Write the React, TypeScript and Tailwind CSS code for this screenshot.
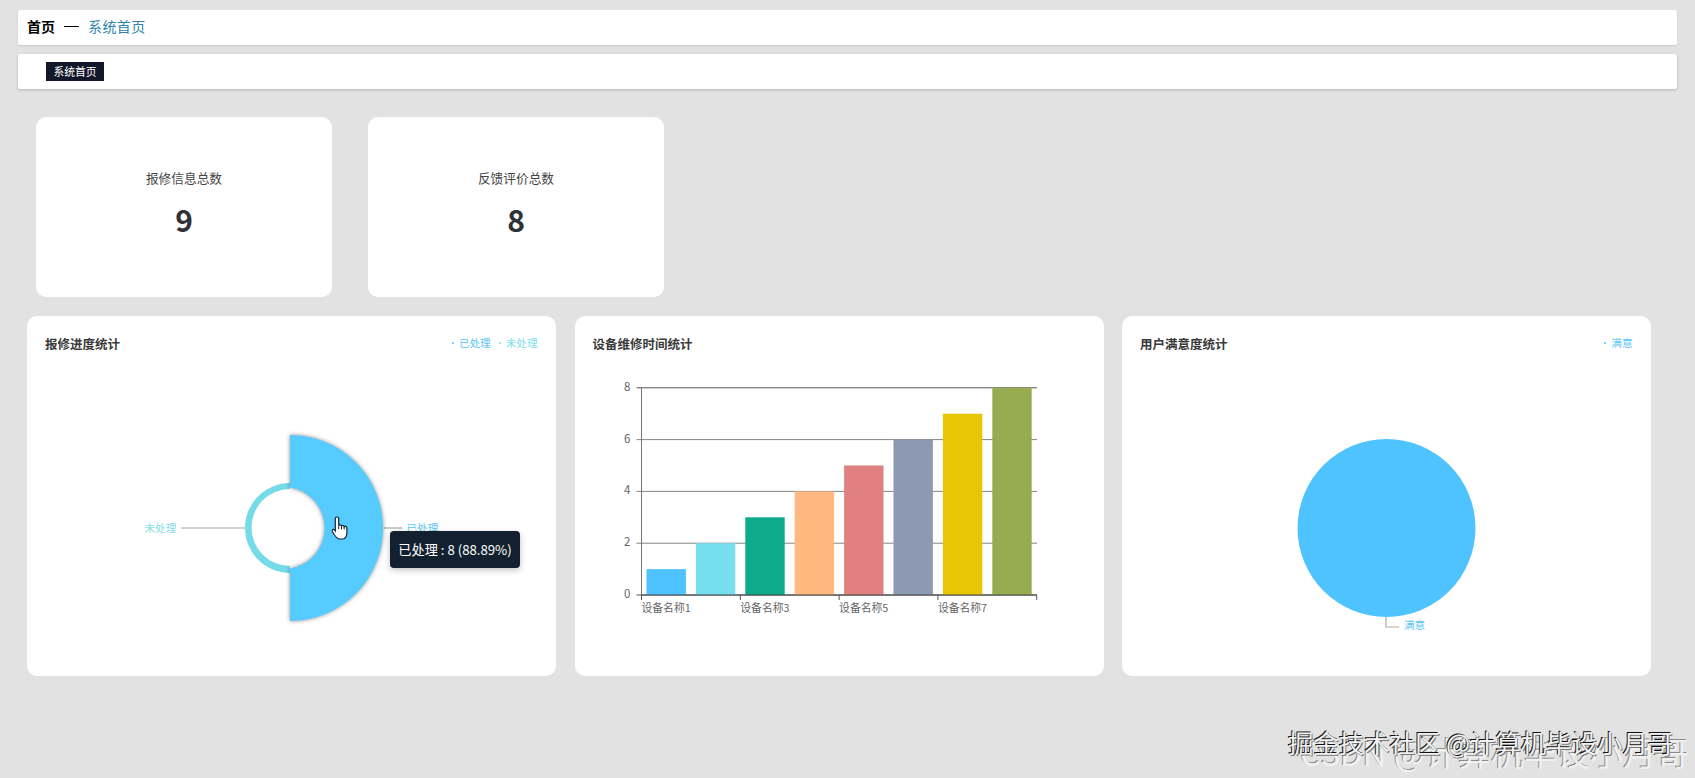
import React from 'react';

const bars = [
  { value: 1, color: '#4fc3ff' },
  { value: 2, color: '#76deee' },
  { value: 3, color: '#0dab8b' },
  { value: 4, color: '#ffb980' },
  { value: 5, color: '#e08080' },
  { value: 6, color: '#8d98b3' },
  { value: 7, color: '#e6c605' },
  { value: 8, color: '#97ac50' },
];

const AXIS_X = 641;
const AXIS_BOTTOM = 594;
const STEP_X = 49.4;
const STEP_Y = 25.9;

const StatCard: React.FC<{ label: string; value: number }> = ({ label, value }) => (
  <div className="w-[296px] h-[180px] bg-white rounded-[10px] flex flex-col items-center">
    <div className="mt-[51px] h-5 leading-5 text-[12.7px] text-[#444]">{label}</div>
    <div className="mt-[11px] h-[40px] leading-[40px] text-[30px] font-bold text-[#2f3136]">{value}</div>
  </div>
);

const Legend: React.FC<{ items: { name: string; color: string }[] }> = ({ items }) => (
  <div className="flex gap-[8px] -mt-[2px]">
    {items.map((it) => (
      <div key={it.name} className="flex items-center gap-[5px] text-[10.6px] leading-4" style={{ color: it.color }}>
        <span className="w-[2px] h-[2px] rounded-full" style={{ background: it.color }} />
        {it.name}
      </div>
    ))}
  </div>
);

const ChartCard: React.FC<{ title: string; legend?: { name: string; color: string }[]; children: React.ReactNode }> = ({ title, legend, children }) => (
  <div className="relative w-[529px] h-[360px] bg-white rounded-[10px]">
    <div className="flex items-center justify-between h-[24px] pt-[16px] pl-[18px] pr-[18.5px] box-content">
      <span className="text-[12.5px] font-semibold text-[#3a3a3a]">{title}</span>
      {legend && <Legend items={legend} />}
    </div>
    {children}
  </div>
);

const HandCursor = () => (
  <svg x="331.5" y="515" width="18" height="24" viewBox="0 0 18 24">
    <path
      d="M5.5 1C6.5 1 7.2 1.8 7.2 2.8V9.5C7.6 8.5 9.8 8.6 10 10C10.4 9.2 12.5 9.3 12.7 10.8C13.2 10 15.2 10.2 15.4 11.8V17C15.4 20 13.6 23 11.5 23H8C6 23 4.5 21 3 19L.8 15.5C0 14 1.8 12.8 3 14L3.8 15V2.8C3.8 1.8 4.5 1 5.5 1Z"
      fill="#fff"
      stroke="#14202c"
      strokeWidth="1.2"
    />
    <path d="M7.2 9.5V13M10 10V13.5M12.7 10.8V13.5" fill="none" stroke="#14202c" strokeWidth="1" />
  </svg>
);

const App: React.FC = () => {
  return (
    <div className="relative w-full h-[778px] overflow-hidden bg-[#e2e2e2] pt-[10px] font-['Noto_Sans_CJK_SC',sans-serif]">
      {/* breadcrumb */}
      <div className="mx-[18px] h-[35px] bg-white rounded-[2px] shadow-[0_1px_2px_rgba(0,0,0,0.12)] flex items-center pl-[9px] pb-[2px] text-[14px]">
        <span className="font-bold text-black">首页</span>
        <span className="ml-[9px] w-[15px] h-px bg-black" />
        <span className="ml-[9px] text-[#2f84b0] tracking-[0.4px]">系统首页</span>
      </div>

      {/* tabs */}
      <div className="mx-[18px] mt-[9px] h-[35px] bg-white rounded-[2px] shadow-[0_1px_3px_rgba(0,0,0,0.2)] pl-[28px] pt-[8px]">
        <div className="w-[58px] h-[19px] bg-[#14162a] text-white text-[10.8px] leading-[19px] text-center">系统首页</div>
      </div>

      {/* totals */}
      <div className="flex gap-[36px] ml-[36px] mt-[28px]">
        <StatCard label="报修信息总数" value={9} />
        <StatCard label="反馈评价总数" value={8} />
      </div>

      {/* charts */}
      <div className="flex gap-[18.5px] ml-[27px] mt-[19px]">
        <ChartCard
          title="报修进度统计"
          legend={[
            { name: '已处理', color: '#5cc6f5' },
            { name: '未处理', color: '#7fdde9' },
          ]}
        >
          <svg className="block w-[529px] h-[320px]" viewBox="27 355 529 320" fontSize="10.6">
            <line x1="181" y1="527" x2="245" y2="527" stroke="#a8a8a8" strokeWidth="1.2" />
            <line x1="384" y1="527" x2="402" y2="527" stroke="#a8a8a8" strokeWidth="1.2" />
            <text x="144.5" y="530.5" fill="#7fdde9">未处理</text>
            <text x="406.5" y="530.5" fill="#5cc6f5">已处理</text>
            <path d="M290 482A45 45 0 0 0 290 572V565A38.5 38.5 0 0 1 290 488Z" fill="#76dbe8" />
            <path
              d="M290 434A93 93 0 0 1 290 620V567.5A41 41 0 0 0 290 486.5Z"
              fill="#55cbff"
              className="drop-shadow-[0_0_2px_rgba(0,0,0,0.45)]"
            />
            <HandCursor />
          </svg>
          <div className="absolute left-[363px] top-[215px] w-[130px] h-[37px] rounded-[4px] bg-[#12202f] text-white text-[13.2px] leading-[37px] text-center shadow-[0_2px_6px_rgba(0,0,0,0.25)]">
            已处理 : 8 (88.89%)
          </div>
        </ChartCard>

        <ChartCard title="设备维修时间统计">
          <svg className="block w-[529px] h-[320px]" viewBox="574.5 355 529 320" fontSize="10.8" fill="#666">
            {[0, 2, 4, 6, 8].map((v) => {
              const y = AXIS_BOTTOM - v * STEP_Y;
              return (
                <g key={v}>
                  <line x1={AXIS_X - 5} y1={y} x2={1036.5} y2={y} stroke={v === 8 || v === 0 ? '#555' : '#858585'} strokeWidth="1" />
                  <text x="630" y={y + 3} textAnchor="end" fontSize="11.5">{v}</text>
                </g>
              );
            })}
            <line x1={AXIS_X} y1="387" x2={AXIS_X} y2="599" stroke="#777" strokeWidth="1" />
            {bars.map((b, i) => (
              <rect
                key={b.color}
                x={AXIS_X + 5 + STEP_X * i}
                y={AXIS_BOTTOM - b.value * STEP_Y}
                width="39.4"
                height={b.value * STEP_Y}
                fill={b.color}
              />
            ))}
            <line x1={AXIS_X} y1={AXIS_BOTTOM} x2={1036.5} y2={AXIS_BOTTOM} stroke="#444" strokeWidth="1" />
            {[0, 2, 4, 6, 8].map((n) => (
              <line key={n} x1={AXIS_X + STEP_X * n} y1={AXIS_BOTTOM} x2={AXIS_X + STEP_X * n} y2="599" stroke="#555" strokeWidth="1" />
            ))}
            {[1, 3, 5, 7].map((n) => (
              <text key={n} x={AXIS_X + STEP_X * (n - 1)} y="611">{`设备名称${n}`}</text>
            ))}
          </svg>
        </ChartCard>

        <ChartCard title="用户满意度统计" legend={[{ name: '满意', color: '#5cc6f5' }]}>
          <svg className="block w-[529px] h-[320px]" viewBox="1122 355 529 320" fontSize="10.6">
            <circle cx="1386.5" cy="527" r="89" fill="#4fc3ff" />
            <path d="M1386 616V626H1399" fill="none" stroke="#aaa" strokeWidth="1.2" />
            <text x="1404" y="628" fill="#5cc6f5">满意</text>
          </svg>
        </ChartCard>
      </div>

      {/* watermarks */}
      <div className="absolute left-[1300px] top-[730px] whitespace-nowrap text-[33px] leading-[44px] text-[#f0f0f0] [text-shadow:-1px_-1px_0_#8c8c8c]">
        CSDN @计算机毕设小月哥
      </div>
      <div className="absolute left-[1288px] top-[725px] whitespace-nowrap text-[25.4px] leading-[34px] text-[#f2f2f2] [text-shadow:-1px_-1px_0_#111,1px_1px_0_#777]">
        掘金技术社区 @计算机毕设小月哥
      </div>
    </div>
  );
};

export default App;
